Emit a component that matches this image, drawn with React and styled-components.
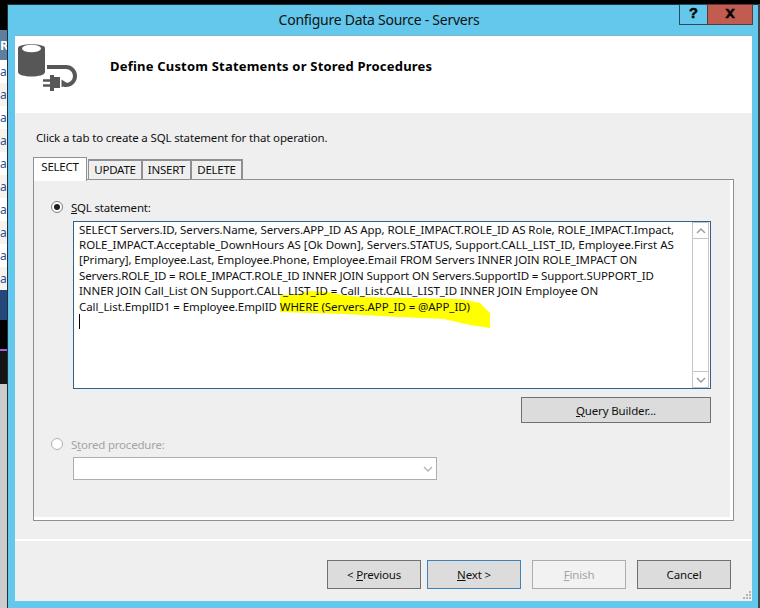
import React from 'react';
import styled, { createGlobalStyle } from 'styled-components';

const Global = createGlobalStyle`
  html, body { margin: 0; padding: 0; background: #000; }
  * { box-sizing: border-box; }
`;
const font = `"Noto Sans", "Open Sans", sans-serif`;
const Screen = styled.div`
  width: 760px; height: 608px; overflow: hidden; display: flex; position: relative;
  font-family: ${font}; font-size: 12px; color: #000; background: #000;
`;
const Strip = styled.div`
  width: 7px; flex: none; display: flex; flex-direction: column; overflow: hidden;
`;
const StripBlock = styled.div`
  height: ${p => p.$h}px; background: ${p => p.$bg}; flex: none;
  ${p => p.$line ? `border-top: 2px solid #a35fd8;` : ''}
`;
const StripHead = styled.div`
  height: 30px; background: #5f7f9f; color: #fff; font-weight: 700; font-size: 13px;
  line-height: 30px; flex: none; overflow: hidden; text-indent: 0;
`;
const StripRow = styled.div`
  height: 23px; flex: none; background: ${p => p.$alt ? '#f6f3ee' : '#fff'};
  color: #2f4f8f; font-size: 12px; line-height: 23px; overflow: hidden;
  text-indent: 0;
`;
const RightEdge = styled.div`
  width: 2px; flex: none; background: #3a4650; margin-top: 4px;
`;
const Win = styled.div`
  flex: none; width: 751px; margin-top: 4px; display: flex; flex-direction: column;
  background: #63c8eb; border-left: 1px solid #21303a; border-top: 1px solid #21303a;
  padding: 0 6px 7px 7px;
`;
const TitleBar = styled.div`
  height: 30px; margin: 0 -6px 0 -7px; display: flex; flex: none;
`;
const Title = styled.div`
  flex: 1; padding-left: 70px; text-align: center; font-size: 14px; line-height: 30px; color: #111;
  letter-spacing: -0.26px;
`;
const Controls = styled.div`
  display: flex; height: 21px; margin-right: 5px; margin-top: -1px; flex: none;
`;
const Ctl = styled.div`
  width: ${p => p.$w}px; height: 21px; display: flex; align-items: center; justify-content: center;
  border: 1px solid #2b4a5c; border-top-color: #21303a; margin-left: -1px;
  background: ${p => p.$close ? '#c35c50' : 'transparent'};
  border-color: ${p => p.$close ? '#5b3a38' : '#2b4a5c'};
  font: 700 ${p => p.$close ? 17 : 15}px/1 "Liberation Mono", "DejaVu Sans Mono", monospace; color: #000;
  padding-bottom: ${p => p.$close ? 3 : 1}px;
  -webkit-text-stroke: 0.4px #000;
`;
const Header = styled.div`
  height: 78px; background: #fff; flex: none; display: flex; border-top: 1px solid #7fb5cc;
`;
const HeaderIcon = styled.svg`
  width: 61px; height: 54px; margin: 5px 0 0 3px; flex: none;
`;
const Heading = styled.div`
  margin: 22px 0 0 31px; font-weight: 700; font-size: 13px; line-height: 17px; color: #000;
  letter-spacing: 0.2px;
`;
const Body = styled.div`
  flex: 1; background: #efefef; display: flex; flex-direction: column; position: relative;
`;
const Hint = styled.div`
  margin: 17px 0 0 21px; height: 16px; line-height: 16px; font-size: 11.5px; color: #111;
  letter-spacing: -0.15px;
`;
const Tabs = styled.div`
  margin: 11px 0 0 18px; display: flex; height: 23px; align-items: flex-end; position: relative; z-index: 1;
`;
const Tab = styled.div`
  width: ${p => p.$w}px; height: ${p => p.$active ? 24 : 21}px;
  margin-bottom: ${p => p.$active ? -1 : 0}px;
  margin-left: ${p => p.$first ? 0 : -1}px;
  border: 1px solid #8f9094; border-bottom: ${p => p.$active ? 'none' : '1px solid #8f9094'};
  border-width: ${p => p.$active ? '1px 1px 0 1px' : '2px 2px 1px 1px'};
  background: ${p => p.$active ? '#fff' : '#efefef'};
  text-align: center; line-height: ${p => p.$active ? 18 : 17}px; font-size: 11.5px;
  letter-spacing: -0.25px; color: #111;
  ${p => p.$active ? 'margin-right: 2px;' : ''}
`;
const Panel = styled.div`
  margin: -1px 0 0 18px; width: 701px; height: 342px; border: 1px solid #8f9094;
  box-shadow: inset -3px -3px 0 #fff; padding: 19px 0 0 0; display: flex; flex-direction: column;
`;
const RadioRow = styled.label`
  height: 16px; display: flex; align-items: center; margin-left: 17px;
  font-size: 11.5px; letter-spacing: -0.22px; color: ${p => p.$off ? '#a4a4a4' : '#111'};
`;
const Radio = styled.span`
  width: 12px; height: 12px; border-radius: 50%; flex: none; margin-right: 8px;
  border: 1px solid ${p => p.$off ? '#b0b0b0' : '#7d7d7d'}; background: #fff;
  display: flex; align-items: center; justify-content: center;
  &::after {
    content: ''; width: 6px; height: 6px; border-radius: 50%;
    background: ${p => p.$on ? '#1f1f1f' : 'transparent'};
  }
`;
const U = styled.span`text-decoration: underline; text-underline-offset: 1px;`;
const Editor = styled.div`
  margin: 6px 0 0 39px; width: 638px; height: 168px; background: #fff; border: 1px solid #31618a;
  display: flex; position: relative;
`;
const Highlight = styled.svg`
  position: absolute; left: 0; top: 0; width: 620px; height: 166px; pointer-events: none;
`;
const Sql = styled.div`
  flex: 1; padding: 0 0 0 5px; margin-top: -0.5px; font-size: 11.5px; line-height: 15.4px; color: #111;
  position: relative; white-space: pre;
`;
const SqlLine = styled.div`
  letter-spacing: ${p => p.$ls}px;
`;
const Caret = styled.span`
  position: absolute; left: 5px; top: 92px; width: 1px; height: 15px; background: #000;
`;
const ScrollBar = styled.div`
  width: 17px; margin: 0 1px 0 0; flex: none; border: 1px solid #c4c4c4; display: flex; flex-direction: column; justify-content: space-between; background: #fff;
`;
const ScrollBtn = styled.div`
  height: 16px; display: flex; align-items: center; justify-content: center;
  ${p => p.$top ? 'border-bottom: 1px solid #c4c4c4;' : 'border-top: 1px solid #c4c4c4;'}
`;
const QueryRow = styled.div`
  display: flex; justify-content: flex-end; margin: 8px 22px 0 0;
`;
const Btn = styled.div`
  width: ${p => p.$w || 94}px; height: ${p => p.$h || 29}px; display: flex; align-items: center; justify-content: center;
  background: ${p => p.$off ? '#f2f2f2' : '#dcdcdc'};
  border: 1px solid ${p => p.$off ? '#a8aeae' : p.$primary ? '#3a83bd' : '#707070'};
  color: ${p => p.$off ? '#a4a4a4' : '#111'};
  font-size: 11.5px; letter-spacing: -0.15px; white-space: pre;
`;
const Combo = styled.div`
  margin: 5px 0 0 39px; width: 364px; height: 23px; background: #fff; border: 1px solid #adadad;
  display: flex; align-items: center; justify-content: flex-end; padding-right: 3px;
`;
const Stored = styled(RadioRow)`margin-top: 13px;`;
const Sep = styled.div`height: 2px; margin-top: 18px; background: #fff; flex: none;`;
const Footer = styled.div`
  margin: 19px 21px 0 0; display: flex; justify-content: flex-end; gap: 11px;
`;
const Pair = styled.div`display: flex; gap: 6px;`;
const Grip = styled.svg`position: absolute; right: 0; bottom: 0; width: 12px; height: 12px;`;

const Chev = ({ d, c = '#9a9a9a', w = 10, h = 6 }) => (
  <svg width={w} height={h} viewBox="0 0 10 6"><path d={d} fill="none" stroke={c} strokeWidth="1.4" /></svg>
);

const rows = [0, 1, 0, 1, 0, 1, 0, 1, 0, 1];
const sql = [
  ['SELECT Servers.ID, Servers.Name, Servers.APP_ID AS App, ROLE_IMPACT.ROLE_ID AS Role, ROLE_IMPACT.Impact,', -0.095],
  ['ROLE_IMPACT.Acceptable_DownHours AS [Ok Down], Servers.STATUS, Support.CALL_LIST_ID, Employee.First AS', -0.017],
  ['[Primary], Employee.Last, Employee.Phone, Employee.Email FROM Servers INNER JOIN ROLE_IMPACT ON', -0.073],
  ['Servers.ROLE_ID = ROLE_IMPACT.ROLE_ID INNER JOIN Support ON Servers.SupportID = Support.SUPPORT_ID', -0.13],
  ['INNER JOIN Call_List ON Support.CALL_LIST_ID = Call_List.CALL_LIST_ID INNER JOIN Employee ON', -0.04],
  ['Call_List.EmplID1 = Employee.EmplID WHERE (Servers.APP_ID = @APP_ID)', -0.073],
];

export default function App() {
  return (
    <Screen>
      <Global />
      <Strip>
        <StripBlock $h={30} $bg="#000" />
        <StripHead>R</StripHead>
        {rows.map((alt, i) => <StripRow key={i} $alt={alt}>a</StripRow>)}
        <StripBlock $h={30} $bg="#24487a" />
        <StripBlock $h={29} $bg="#000" />
        <StripBlock $h={35} $bg="#151515" $line />
        <StripBlock $h={230} $bg="#cccccc" />
      </Strip>
      <Win>
        <TitleBar>
          <Title>Configure Data Source - Servers</Title>
          <Controls>
            <Ctl $w={29}>?</Ctl>
            <Ctl $w={46} $close>x</Ctl>
          </Controls>
        </TitleBar>
        <Header>
          <HeaderIcon viewBox="0 0 61 54">
            <path d="M0 7C0 2 27 2 27 7V31C27 37 0 37 0 31Z" fill="#575757" />
            <ellipse cx="13.5" cy="7.500" rx="9.500" ry="3.800" fill="#fff" />
            <path d="M29 26H48A9 9 0 0 1 48 44H46" fill="none" stroke="#575757" strokeWidth="4" />
            <path d="M32 34H36V36H42V47H36V50H32Z" fill="#575757" />
            <path d="M25 39.500H32M25 44.500H32" stroke="#575757" strokeWidth="2.600" />
            <path d="M43.500 38.500L49 42L49 45L43.500 46Z" fill="#575757" />
          </HeaderIcon>
          <Heading>Define Custom Statements or Stored Procedures</Heading>
        </Header>
        <Body>
          <Hint>Click a tab to create a SQL statement for that operation.</Hint>
          <Tabs>
            <Tab $w={54} $active $first>SELECT</Tab>
            <Tab $w={55}>UPDATE</Tab>
            <Tab $w={50}>INSERT</Tab>
            <Tab $w={52}>DELETE</Tab>
          </Tabs>
          <Panel>
            <RadioRow>
              <Radio $on /><span><U>S</U>QL statement:</span>
            </RadioRow>
            <Editor>
              <Highlight viewBox="0 0 620 166">
                <path d="M206 73L219 73L236 69L253 70L269 73L286 75L386 77L406 81L416 91L416 106L396 103L370 97L326 95L270 92L206 90Z" fill="#ffff00" />
              </Highlight>
              <Sql>
                {sql.map(([t, ls]) => <SqlLine key={t} $ls={ls}>{t}</SqlLine>)}
                <Caret />
              </Sql>
              <ScrollBar>
                <ScrollBtn $top><Chev d="M1 5L5 1L9 5" /></ScrollBtn>
                <ScrollBtn><Chev d="M1 1L5 5L9 1" /></ScrollBtn>
              </ScrollBar>
            </Editor>
            <QueryRow><Btn $w={190} $h={26}><span><U>Q</U>uery Builder...</span></Btn></QueryRow>
            <Stored $off>
              <Radio $off /><span>S<U>t</U>ored procedure:</span>
            </Stored>
            <Combo><Chev d="M1 1L5 5L9 1" c="#b4b4b4" /></Combo>
          </Panel>
          <Sep />
          <Footer>
            <Pair>
              <Btn><span>{'< '}<U>P</U>revious</span></Btn>
              <Btn $primary><span><U>N</U>ext {'>'}</span></Btn>
            </Pair>
            <Btn $off><span><U>F</U>inish</span></Btn>
            <Btn>Cancel</Btn>
          </Footer>
          <Grip viewBox="0 0 12 12">
            <path d="M9 2h2v2h-2zM6 5h2v2h-2zM9 5h2v2h-2zM3 8h2v2h-2zM6 8h2v2h-2zM9 8h2v2h-2z" fill="#b4b4b4" />
          </Grip>
        </Body>
      </Win>
      <RightEdge />
    </Screen>
  );
}
